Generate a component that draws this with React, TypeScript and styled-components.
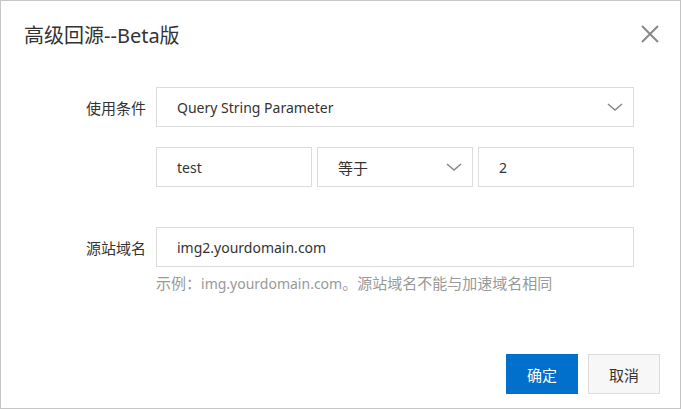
import { FC } from 'react';
import styled, { createGlobalStyle } from 'styled-components';

const GlobalStyle = createGlobalStyle`
  html, body {
    margin: 0;
    padding: 0;
    background: #fff;
  }
  body {
    font-family: 'Noto Sans', 'Noto Sans CJK SC', sans-serif;
    color: #333;
  }
`;

const Dialog = styled.div`
  box-sizing: border-box;
  width: 681px;
  height: 409px;
  border: 1px solid #c6c6c6;
  background: #fff;
  display: flex;
  flex-direction: column;
`;

const Header = styled.div`
  display: flex;
  align-items: center;
  justify-content: space-between;
  height: 66px;
  padding: 0 21px 0 23px;
`;

const Title = styled.h2`
  margin: 0;
  font-size: 20px;
  font-weight: 400;
  color: #333;
`;

// CJK glyphs render a touch larger than the latin text in the original
const Han = styled.span<{ $size?: number }>`
  font-size: ${(p) => p.$size ?? 15}px;
`;

const CloseButton = styled.button`
  border: 0;
  background: none;
  padding: 0;
  width: 18px;
  height: 18px;
  display: flex;
  cursor: pointer;
`;

const Body = styled.div`
  padding-top: 20px;
  display: flex;
  flex-direction: column;
`;

const Row = styled.div<{ $gap?: number }>`
  display: grid;
  grid-template-columns: 145px 478px;
  column-gap: 10px;
  align-items: center;
  margin-bottom: ${(p) => p.$gap ?? 20}px;
`;

const Label = styled.div`
  text-align: right;
  font-size: 15px;
  color: #333;
`;

const Controls = styled.div`
  display: grid;
  grid-template-columns: 156px 156px 156px;
  column-gap: 5px;
`;

const Field = styled.div`
  box-sizing: border-box;
  height: 40px;
  border: 1px solid #dcdcdc;
  padding: 0 10px 0 20px;
  display: flex;
  align-items: center;
  justify-content: space-between;
  font-size: 14px;
  color: #333;
  background: #fff;
`;

const Hint = styled.div`
  grid-column: 2;
  margin-top: 5px;
  font-size: 14px;
  color: #999;
`;

const Footer = styled.div`
  margin-top: auto;
  display: flex;
  justify-content: flex-end;
  gap: 10px;
  padding: 0 20px 14px 0;
`;

const Button = styled.button<{ $primary?: boolean }>`
  box-sizing: border-box;
  width: 72px;
  height: 40px;
  font-family: inherit;
  font-size: 15px;
  border: 1px solid ${(p) => (p.$primary ? '#0070cc' : '#dcdcdc')};
  background: ${(p) => (p.$primary ? '#0070cc' : '#f7f7f7')};
  color: ${(p) => (p.$primary ? '#fff' : '#333')};
  cursor: pointer;
`;

const Chevron: FC = () => (
  <svg width="16" height="8" viewBox="0 0 16 8" fill="none">
    <path d="M1 1 L8 7 L15 1" stroke="#888" strokeWidth="1.5" />
  </svg>
);

const CloseIcon: FC = () => (
  <svg width="18" height="18" viewBox="0 0 18 18">
    <path d="M1 1 L17 17 M17 1 L1 17" stroke="#888" strokeWidth="2" />
  </svg>
);

export default function App() {
  return (
    <>
      <GlobalStyle />
      <Dialog>
        <Header>
          <Title>高级回源--Beta版</Title>
          <CloseButton aria-label="close">
            <CloseIcon />
          </CloseButton>
        </Header>
        <Body>
          <Row>
            <Label>使用条件</Label>
            <Field>
              Query String Parameter
              <Chevron />
            </Field>
          </Row>
          <Row $gap={40}>
            <span />
            <Controls>
              <Field>test</Field>
              <Field>
                <Han>等于</Han>
                <Chevron />
              </Field>
              <Field>2</Field>
            </Controls>
          </Row>
          <Row $gap={0}>
            <Label>源站域名</Label>
            <Field>img2.yourdomain.com</Field>
            <Hint>
              <Han>示例：</Han>img.yourdomain.com<Han>。源站域名不能与加速域名相同</Han>
            </Hint>
          </Row>
        </Body>
        <Footer>
          <Button $primary>确定</Button>
          <Button>取消</Button>
        </Footer>
      </Dialog>
    </>
  );
}
